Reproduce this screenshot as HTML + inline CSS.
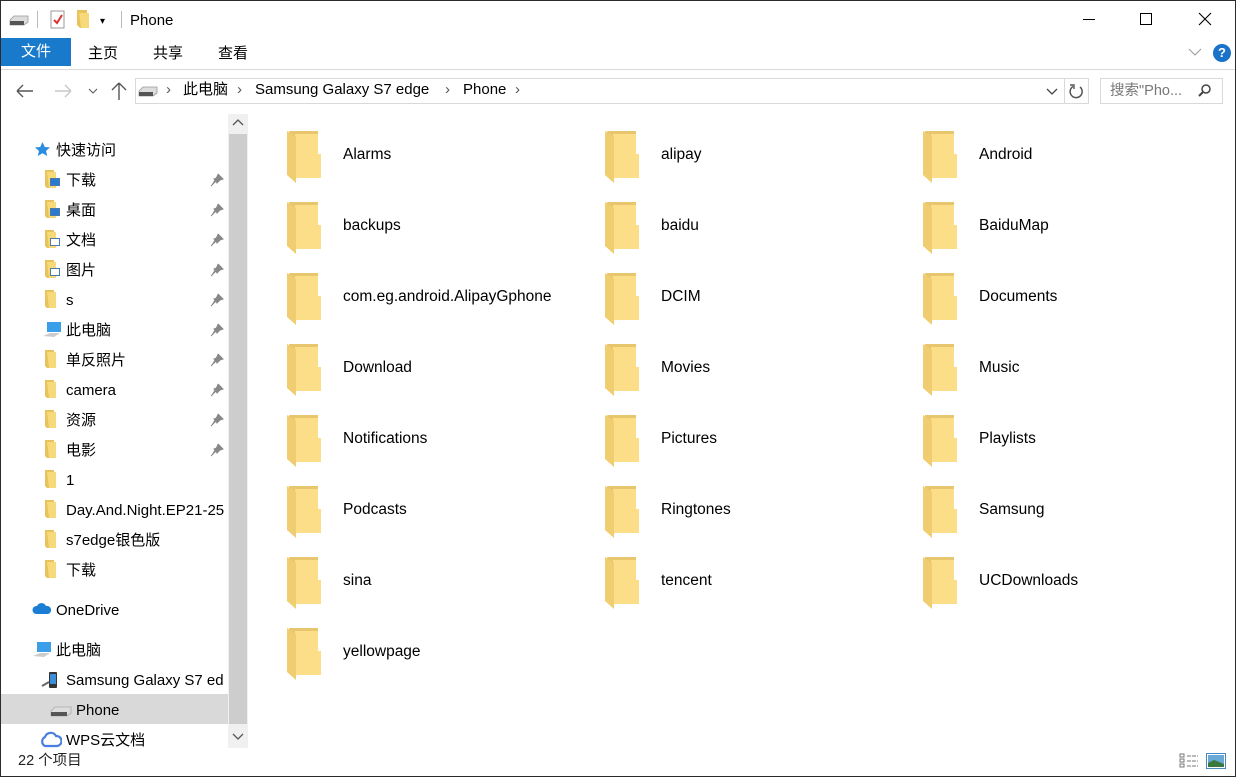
<!DOCTYPE html>
<html><head><meta charset="utf-8"><style>
*{margin:0;padding:0;box-sizing:border-box}
body{width:1236px;height:777px;overflow:hidden;background:#fff;font-family:"Liberation Sans","Noto Sans CJK SC",sans-serif;font-size:15px;color:#000;position:relative}
.frame{position:absolute;left:0;top:0;width:1236px;height:777px;border:1px solid #2b2b2b;pointer-events:none;z-index:9}
.a{position:absolute;white-space:nowrap;line-height:28px}
.fold{position:absolute;width:36px;height:54px}
.fl{position:absolute;font-size:15.5px;color:#000}
</style></head><body>
<div class="frame"></div>
<svg class="a" style="left:9px;top:14px" width="20" height="12"><path d="M1 6 L5 2 H19 V8 L15 11 H1 Z" fill="#ddd" stroke="#999" stroke-width=".8"/><rect x="1" y="7" width="14" height="4" fill="#555"/></svg>
<div class="a" style="left:37px;top:11px;width:1px;height:17px;background:#bbb"></div>
<svg class="a" style="left:50px;top:10px" width="16" height="20"><rect x="1" y="1" width="13" height="17" fill="#fff" stroke="#999"/><path d="M4 10 L7 13 L12 5" stroke="#d33" stroke-width="2" fill="none"/></svg>
<svg class="a" style="left:76px;top:10px" width="14" height="19"><path d="M1 0 H11 V18 H4 L1 15 Z" fill="#e8c25a"/><path d="M3 3 H13 V18 H5 Z" fill="#f7d979"/></svg>
<div class="a" style="left:100px;top:8px;font-size:10px">▾</div>
<div class="a" style="left:121px;top:11px;width:1px;height:17px;background:#bbb"></div>
<div class="a" style="left:130px;top:7px;font-size:15px">Phone</div>
<div class="a" style="left:1083px;top:19px;width:12px;height:1px;background:#000"></div>
<div class="a" style="left:1140px;top:13px;width:12px;height:12px;border:1px solid #000"></div>
<svg class="a" style="left:1198px;top:12px" width="14" height="14"><path d="M1 1 L13 13 M13 1 L1 13" stroke="#000" stroke-width="1.1"/></svg>
<div class="a" style="left:1px;top:38px;width:70px;height:28px;background:#1979ca;color:#fff;text-align:center;line-height:28px;font-size:15px">文件</div>
<div class="a" style="left:88px;top:40px">主页</div>
<div class="a" style="left:153px;top:40px">共享</div>
<div class="a" style="left:218px;top:40px">查看</div>
<svg class="a" style="left:1188px;top:47px" width="14" height="10"><path d="M1 2 L7 8 L13 2" stroke="#999" fill="none"/></svg>
<div class="a" style="left:1213px;top:44px;width:18px;height:18px;border-radius:50%;background:#1a73c9;color:#fff;font-size:13px;font-weight:bold;text-align:center;line-height:18px">?</div>
<div class="a" style="left:1px;top:69px;width:1234px;height:1px;background:#dadada"></div>
<svg class="a" style="left:15px;top:83px" width="20" height="16"><path d="M2 8 H18 M2 8 L8 2 M2 8 L8 14" stroke="#555" stroke-width="1.4" fill="none"/></svg>
<svg class="a" style="left:53px;top:83px" width="20" height="16"><path d="M2 8 H18 M18 8 L12 2 M18 8 L12 14" stroke="#c8c8c8" stroke-width="1.4" fill="none"/></svg>
<svg class="a" style="left:88px;top:87px" width="10" height="8"><path d="M1 2 L5 6 L9 2" stroke="#555" fill="none"/></svg>
<svg class="a" style="left:110px;top:81px" width="18" height="20"><path d="M9 19 V2 M9 2 L2 9 M9 2 L16 9" stroke="#555" stroke-width="1.4" fill="none"/></svg>
<div class="a" style="left:135px;top:78px;width:954px;height:26px;border:1px solid #d9d9d9"></div>
<svg class="a" style="left:138px;top:86px" width="20" height="11"><path d="M1 5 L5 1 H19 V7 L15 10 H1 Z" fill="#ddd" stroke="#999" stroke-width=".8"/><rect x="1" y="6" width="14" height="4" fill="#555"/></svg>
<div class="a" style="left:166px;top:76px;color:#555">›</div>
<div class="a" style="left:183px;top:76px">此电脑</div>
<div class="a" style="left:237px;top:76px;color:#555">›</div>
<div class="a" style="left:255px;top:76px">Samsung Galaxy S7 edge</div>
<div class="a" style="left:445px;top:76px;color:#555">›</div>
<div class="a" style="left:463px;top:76px">Phone</div>
<div class="a" style="left:515px;top:76px;color:#555">›</div>
<svg class="a" style="left:1045px;top:87px" width="14" height="10"><path d="M2 2 L7 7 L12 2" stroke="#444" stroke-width="1.3" fill="none"/></svg>
<div class="a" style="left:1064px;top:78px;width:1px;height:26px;background:#d9d9d9"></div>
<svg class="a" style="left:1068px;top:83px" width="16" height="17"><path d="M12 4 A6 6 0 1 1 5 3.5" stroke="#555" stroke-width="1.5" fill="none"/><path d="M2 2 L6 2 L6 6" stroke="#555" stroke-width="1.4" fill="none"/></svg>
<div class="a" style="left:1100px;top:78px;width:123px;height:26px;border:1px solid #d9d9d9"></div>
<div class="a" style="left:1110px;top:77px;color:#777;font-size:14.5px">搜索"Pho...</div>
<svg class="a" style="left:1197px;top:83px" width="16" height="16"><circle cx="9" cy="6" r="4" stroke="#444" stroke-width="1.5" fill="none"/><path d="M6 9 L2 13" stroke="#444" stroke-width="2"/></svg>
<div class="a" style="left:1px;top:694px;width:227px;height:30px;background:#d9d9d9"></div>
<div class="a" style="left:228px;top:114px;width:20px;height:634px;background:#f0f0f0"></div>
<div class="a" style="left:229px;top:134px;width:18px;height:590px;background:#cdcdcd"></div>
<svg class="a" style="left:232px;top:119px" width="12" height="8"><path d="M1 6 L6 1 L11 6" stroke="#555" stroke-width="1.3" fill="none"/></svg>
<svg class="a" style="left:232px;top:732px" width="12" height="8"><path d="M1 2 L6 7 L11 2" stroke="#555" stroke-width="1.3" fill="none"/></svg>
<svg class="a" style="left:34px;top:141px" width="17" height="16"><path d="M8.5 1 L10.8 6 L16 6.4 L12 10 L13.3 15 L8.5 12.3 L3.7 15 L5 10 L1 6.4 L6.2 6 Z" fill="#2b8de0"/></svg>
<div class="a" style="left:56px;top:137px">快速访问</div>
<div id="qa"></div>
<svg class="a" style="left:32px;top:601px" width="20" height="14"><path d="M4 13 A4 4 0 0 1 5 5 A5 5 0 0 1 14 5 A4 4 0 0 1 16 13 Z" fill="#1a7fd4"/></svg>
<div class="a" style="left:56px;top:597px">OneDrive</div>
<svg class="a" style="left:32px;top:641px" width="20" height="18"><rect x="5" y="1" width="14" height="10" fill="#3a9ee8"/><path d="M1 15 L8 12 H18 L12 16 Z" fill="#ccc"/></svg>
<div class="a" style="left:56px;top:637px">此电脑</div>
<svg class="a" style="left:40px;top:668px" width="22" height="22"><rect x="9" y="4" width="8" height="16" rx="1" fill="#333"/><rect x="10" y="6" width="6" height="10" fill="#3a8fd8"/><path d="M2 18 L9 14" stroke="#666" stroke-width="2"/></svg>
<div class="a" style="left:66px;top:667px">Samsung Galaxy S7 ed</div>
<svg class="a" style="left:50px;top:705px" width="22" height="12"><path d="M1 6 L5 2 H21 V8 L17 11 H1 Z" fill="#ddd" stroke="#aaa" stroke-width=".8"/><rect x="1" y="7" width="16" height="4" fill="#555"/></svg>
<div class="a" style="left:76px;top:697px">Phone</div>
<svg class="a" style="left:40px;top:731px" width="22" height="17"><path d="M5 15 A5 5 0 0 1 5 6 A6 6 0 0 1 16 5 A5 5 0 0 1 17 15 Z" fill="#fff" stroke="#4a7ee0" stroke-width="2.2"/></svg>
<div class="a" style="left:66px;top:727px">WPS云文档</div>
<div class="a" style="left:18px;top:747px;font-size:14.5px;color:#222">22 个项目</div>
<svg class="a" style="left:1179px;top:753px" width="20" height="16"><g fill="none" stroke="#777"><rect x="1" y="1" width="4" height="3"/><rect x="1" y="6" width="4" height="3"/><rect x="1" y="11" width="4" height="3"/><path d="M8 3 H19 M8 8 H19 M8 13 H19" stroke-dasharray="4 1"/></g></svg>
<svg class="a" style="left:1206px;top:753px" width="20" height="16"><rect x="0.5" y="0.5" width="19" height="15" fill="#fff" stroke="#4a8ac0"/><rect x="2" y="2" width="16" height="12" fill="#6aa8d8"/><path d="M2 10 L8 7 L18 11 V14 H2 Z" fill="#3a7a3a"/></svg>
<div id="grid"></div>
<script>
var qa=[["下载",1],["桌面",1],["文档",1],["图片",1],["s",1],["此电脑",2],["单反照片",1],["camera",1],["资源",1],["电影",1],["1",0],["Day.And.Night.EP21-25",0],["s7edge银色版",0],["下载",0]];
var h="";
qa.forEach(function(q,i){var y=169+i*30;
if(q[1]==2){h+='<svg class="a" style="left:42px;top:'+(y+2)+'px" width="20" height="18"><rect x="5" y="1" width="14" height="10" fill="#3a9ee8"/><path d="M1 15 L8 12 H18 L12 16 Z" fill="#ccc"/></svg>';}
else{h+='<svg class="a" style="left:44px;top:'+(y+1)+'px" width="14" height="19"><path d="M1 0 H10 V18 H3 L1 16 Z" fill="#e8c25a"/><path d="M3 2 H12 V18 H5 Z" fill="#f7d979"/></svg>';}
if(i<4){var c=["#2a7ad0","#2a7ad0","#fff","#fff"][i];h+='<div class="a" style="left:50px;top:'+(y+9)+'px;width:10px;height:8px;background:'+c+';border:1px solid #4a7aaa"></div>';}
h+='<div class="a" style="left:66px;top:'+(y-2)+'px;max-width:162px;overflow:hidden">'+q[0]+'</div>';
if(q[1])h+='<svg class="a" style="left:210px;top:'+(y+4)+'px" width="14" height="14"><path d="M8 1 L13 6 L10 7 L7 10 L6 8 L2 12 L1 13 M6 8 L4 6 L7 5 L8 1" fill="#888" stroke="#888"/></svg>';
});
document.getElementById("qa").innerHTML=h;
var f=["Alarms","alipay","Android","backups","baidu","BaiduMap","com.eg.android.AlipayGphone","DCIM","Documents","Download","Movies","Music","Notifications","Pictures","Playlists","Podcasts","Ringtones","Samsung","sina","tencent","UCDownloads","yellowpage"];
var g="";
f.forEach(function(n,i){var c=i%3,r=Math.floor(i/3);var x=286+c*318,y=130+r*71;
g+='<svg class="fold" style="left:'+x+'px;top:'+y+'px" viewBox="0 0 36 54"><path d="M3 1 H32 V24 H35 V48 H10 Z" fill="#e8c66e"/><path d="M9 4 H32 V24 H35 V48 H9 Z" fill="#fcdd88"/><path d="M1 1 L10 7 V53 L1 45 Z" fill="#f0cd70"/></svg>';
g+='<div class="fl a" style="left:'+(x+57)+'px;top:'+(y+11)+'px">'+n+'</div>';});
document.getElementById("grid").innerHTML=g;
</script>
</body></html>
